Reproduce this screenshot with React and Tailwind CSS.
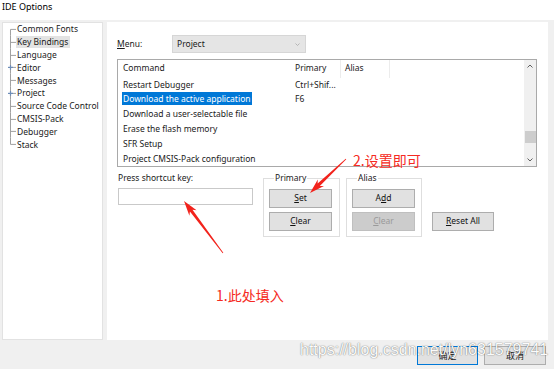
import React from "react";

const FONT = "font-['Noto_Sans','Noto_Sans_CJK_SC',sans-serif]";

const treeItems = [
  { label: "Common Fonts", first: true },
  { label: "Key Bindings", selected: true },
  { label: "Language" },
  { label: "Editor", plus: true },
  { label: "Messages" },
  { label: "Project", plus: true },
  { label: "Source Code Control" },
  { label: "CMSIS-Pack" },
  { label: "Debugger" },
  { label: "Stack", last: true },
];

const commands = [
  { name: "Restart Debugger", primary: "Ctrl+Shif..." },
  { name: "Download the active application", primary: "F6", selected: true },
  { name: "Download a user-selectable file" },
  { name: "Erase the flash memory" },
  { name: "SFR Setup" },
  { name: "Project CMSIS-Pack configuration" },
];

// tapered annotation arrow, tail -> tip
function arrowPoints(tx, ty, hx, hy, w0, w1, hw, hl) {
  const dx = hx - tx;
  const dy = hy - ty;
  const len = Math.hypot(dx, dy);
  const ux = dx / len;
  const uy = dy / len;
  const nx = -uy;
  const ny = ux;
  const bx = hx - ux * hl;
  const by = hy - uy * hl;
  const cx = hx - ux * (hl - 3);
  const cy = hy - uy * (hl - 3);
  const pts = [
    [tx + (nx * w0) / 2, ty + (ny * w0) / 2],
    [cx + (nx * w1) / 2, cy + (ny * w1) / 2],
    [bx + (nx * hw) / 2, by + (ny * hw) / 2],
    [hx, hy],
    [bx - (nx * hw) / 2, by - (ny * hw) / 2],
    [cx - (nx * w1) / 2, cy - (ny * w1) / 2],
    [tx - (nx * w0) / 2, ty - (ny * w0) / 2],
  ];
  return pts.map((p) => p.join(",")).join(" ");
}

function TreeLines({ first, last, plus }) {
  return (
    <svg width="13" height="12.8" viewBox="0 0 13 12.8" className="shrink-0">
      <line x1="7.5" y1={first ? 6.4 : 0} x2="7.5" y2={last ? 6.4 : 12.8} stroke="#a0a0a0" strokeWidth="1" />
      <line x1="7.5" y1="6.4" x2="13" y2="6.4" stroke="#a0a0a0" strokeWidth="1" />
      {plus && (
        <g stroke="#6d8db8" strokeWidth="1.2">
          <line x1="5" y1="6.4" x2="10" y2="6.4" />
          <line x1="7.5" y1="4" x2="7.5" y2="8.8" />
        </g>
      )}
    </svg>
  );
}

function Btn({ children, disabled, className = "" }) {
  return (
    <div
      className={`h-[19px] flex items-center justify-center border text-[8.5px] ${
        disabled
          ? "border-[#bfbfbf] bg-[#cccccc] text-[#9a9a9a]"
          : "border-[#adadad] bg-[#e1e1e1] text-[#111]"
      } ${className}`}
    >
      {children}
    </div>
  );
}

function Chevron({ up }) {
  return (
    <svg width="6" height="4" viewBox="0 0 6 4">
      <polyline
        points={up ? "0.5,3.5 3,1 5.5,3.5" : "0.5,0.5 3,3 5.5,0.5"}
        fill="none"
        stroke="#606060"
        strokeWidth="1"
      />
    </svg>
  );
}

export default function App() {
  return (
    <div className={`relative w-[554px] h-[369px] overflow-hidden bg-[#f0f0f0] flex flex-col text-[#1a1a1a] ${FONT}`}>
      {/* Title */}
      <div className="h-[20px] bg-white pl-[2px] pt-[1px] text-[9px] leading-[12px] text-black">IDE Options</div>

      {/* Panels */}
      <div className="flex pt-[2px] pl-[2px] pr-[6px] gap-[4px] h-[320px]">
        {/* Tree */}
        <div className="w-[101px] h-[318px] bg-white border border-[#e2e2e2] text-[8.5px]">
          {treeItems.map((it) => (
            <div key={it.label} className="flex items-center h-[12.8px]">
              <TreeLines first={it.first} last={it.last} plus={it.plus} />
              <span className={`pl-[1px] pr-[2px] leading-[12px] whitespace-nowrap ${it.selected ? "bg-[#e3e3e3]" : ""}`}>
                {it.label}
              </span>
            </div>
          ))}
        </div>

        {/* Right pane */}
        <div className="flex-1 h-[318px] bg-white pl-[10px] pt-[13px] text-[8.5px]">
          <div className="flex items-center h-[18px]">
            <span className="w-[55px]">
              <u>M</u>enu:
            </span>
            <div className="w-[134px] h-[18px] flex items-center justify-between bg-[#e5e5e5] border border-[#d6d6d6] pl-[4px] pr-[5px]">
              <span>Project</span>
              <svg width="5" height="3" viewBox="0 0 5 3">
                <polyline points="0.5,0.5 2.5,2.5 4.5,0.5" fill="none" stroke="#a8a8a8" strokeWidth="0.8" />
              </svg>
            </div>
          </div>

          {/* Command list */}
          <div className="mt-[6px] w-[420px] h-[108px] border border-[#a9a9a9] flex">
            <div className="flex-1">
              <div className="flex h-[17.5px] items-center">
                <div className="w-[173px] pl-[5px]">Command</div>
                <div className="w-[50px] h-full flex items-center pl-[4px] border-r border-[#ececec]">Primary</div>
                <div className="w-[49px] h-full flex items-center pl-[4px] border-r border-[#ececec]">Alias</div>
              </div>
              {commands.map((c) => (
                <div key={c.name} className="flex h-[14.8px] items-center">
                  <div className="w-[173px] pl-[4px]">
                    <span className={`px-[1px] py-[1px] ${c.selected ? "bg-[#0078d7] text-white" : ""}`}>{c.name}</span>
                  </div>
                  <div className="w-[50px] pl-[4px] whitespace-nowrap">{c.primary}</div>
                </div>
              ))}
            </div>
            <div className="w-[12px] bg-[#f0f0f0] flex flex-col items-center">
              <div className="h-[12px] flex items-center">
                <Chevron up />
              </div>
              <div className="flex-1 w-full pt-[59px]">
                <div className="h-[12px] w-[11px] mx-auto bg-[#cdcdcd]" />
              </div>
              <div className="h-[12px] flex items-center">
                <Chevron />
              </div>
            </div>
          </div>

          {/* Shortcut row */}
          <div className="flex items-start mt-[5px]">
            <div className="w-[136px] pl-[1px]">
              <div className="leading-[12px]">Press shortcut key:</div>
              <div className="mt-[4px] h-[17px] w-[135px] border border-[#c9c9c9] bg-white" />
            </div>

            <fieldset className="ml-[10px] w-[77px] border border-[#dedede] pl-[5px] pr-[7px] pb-[5px]">
              <legend className="ml-[5px] px-[1px] leading-[12px]">Primary</legend>
              <Btn className="mt-[5px] w-[63px]">
                <u>S</u>et
              </Btn>
              <Btn className="mt-[4px] w-[63px]">
                <u>C</u>lear
              </Btn>
            </fieldset>

            <fieldset className="ml-[6px] w-[76px] border border-[#dedede] pl-[5px] pr-[6px] pb-[5px]">
              <legend className="ml-[5px] px-[1px] leading-[12px]">Alias</legend>
              <Btn className="mt-[5px] w-[63px]">
                A<u>d</u>d
              </Btn>
              <Btn disabled className="mt-[4px] w-[63px]">
                <u>C</u>lear
              </Btn>
            </fieldset>

            <Btn className="ml-[10px] w-[62px] self-end mb-[6px]">
              <u>R</u>eset All
            </Btn>
          </div>
        </div>
      </div>

      {/* Bottom buttons */}
      <div className="flex-1 flex justify-end items-start pt-[6px] pr-[8px] gap-[6px] text-[9px]">
        <div className="w-[61px] h-[19px] flex items-center justify-center border border-[#0078d7] bg-[#e1e1e1]">确定</div>
        <div className="w-[62px] h-[19px] flex items-center justify-center border border-[#adadad] bg-[#e1e1e1]">取消</div>
      </div>

      {/* Annotations */}
      <svg className="absolute inset-0 pointer-events-none" width="554" height="369" viewBox="0 0 554 369">
        <polygon points={arrowPoints(223, 253, 184, 201, 0.8, 3.2, 9, 15)} fill="#f2231c" />
        <polygon points={arrowPoints(346, 159, 310, 193, 0.8, 3.2, 9, 15)} fill="#f2231c" />
      </svg>
      <div className="absolute left-[353px] top-[152px] text-[14px] leading-[16px] text-[#f52a22] font-['Noto_Sans_CJK_SC',sans-serif]">
        2.设置即可
      </div>
      <div className="absolute left-[216px] top-[287px] text-[14px] leading-[16px] text-[#f52a22] font-['Noto_Sans_CJK_SC',sans-serif]">
        1.此处填入
      </div>
      <div className="absolute left-[300px] top-[341px] text-[16px] leading-[18px] whitespace-nowrap text-[#fbfbfb] font-['Liberation_Sans',sans-serif] [text-shadow:0_0_1px_rgba(0,0,0,0.55),0_0_2px_rgba(0,0,0,0.2)]">
        https://blog.csdn.net/lyn631579741
      </div>
    </div>
  );
}
